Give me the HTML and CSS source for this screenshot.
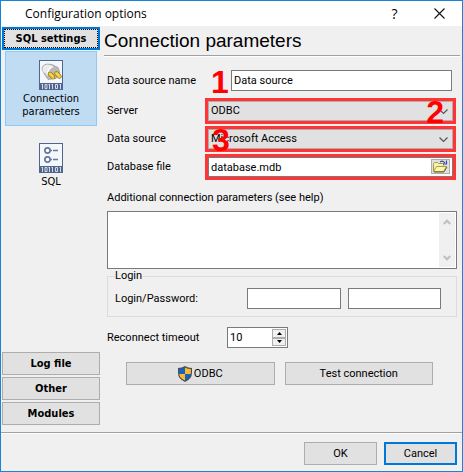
FILE: index.html
```html
<!DOCTYPE html>
<html lang="en">
<head>
    <meta charset="UTF-8">
    <meta name="viewport" content="width=device-width, initial-scale=1.0">
    <title>Configuration options</title>
    <link rel="stylesheet" href="styles.css">
</head>

<body>
    <header class="titlebar">
        <h1 class="title">Configuration options</h1>
        <button type="button" class="title-button" aria-label="Help">?</button>
        <button type="button" class="title-button" aria-label="Close">
            <svg width="11" height="11" viewBox="0 0 11 11"><path d="M.5.5l10 10M10.5.5l-10 10" stroke="#111" stroke-width="1.1"/></svg>
        </button>
    </header>

    <div class="window-body">
        <nav class="sidebar">
            <button type="button" class="group-button active">SQL settings</button>
            <button type="button" class="side-item selected">
                <svg width="24" height="30" viewBox="0 0 24 30">
                    <rect x=".5" y=".5" width="23" height="29" fill="#f4f7fc" stroke="#52658c"/>
                    <path d="M3 9q0-4 5-5l5 .5 6 3 2 5-4 6-8 1-4-6z" fill="#b9b9b9" stroke="#8f8f8f" stroke-width=".6"/>
                    <path d="M3.500 9q0-4 5-4.500l5 1-5 8q-5 0-5-4.500z" fill="#ececec"/>
                    <path d="M14 6.500q-6 3-6 9" fill="none" stroke="#fff" stroke-width="1.200"/>
                    <path d="M11 14l3 3M17.500 13.500l3 3" stroke="#7d6200" stroke-width="4.400" stroke-linecap="round"/>
                    <path d="M11 14l3 3M17.500 13.500l3 3" stroke="#f5c52b" stroke-width="3.200" stroke-linecap="round"/>
                    <path d="M11 13.500l2.500 2.500M17.500 13l2.500 2.500" stroke="#ffe98a" stroke-linecap="round"/>
                    <rect x="1" y="23" width="22" height="6" fill="#52658c"/>
                    <path d="M3.500 24v5M2.500 24.500h1M13.500 24v5M12.500 24.500h1M10.500 24v5M9.500 24.500h1M21.500 24v5M20.500 24.500h1M6 24.500h2v4H6zM16.500 24.500h2v4h-2z" fill="none" stroke="#dfe6f4" stroke-width=".9"/>
                </svg>
                <span>Connection parameters</span>
            </button>
            <button type="button" class="side-item">
                <svg width="24" height="30" viewBox="0 0 24 30">
                    <rect x=".5" y=".5" width="23" height="29" fill="#f4f7fc" stroke="#52658c"/>
                    <circle cx="8.500" cy="7.500" r="2.600" fill="#fff" stroke="#65779d" stroke-width="1.600"/>
                    <circle cx="8.500" cy="16.500" r="2.600" fill="#fff" stroke="#65779d" stroke-width="1.600"/>
                    <path d="M5 7.500h1M11 7.500h2M14 7.500h5M5 16.500h1M11 16.500h2M14 16.500h5" stroke="#65779d" stroke-width="1.400"/>
                    <rect x="1" y="23" width="22" height="6" fill="#52658c"/>
                    <path d="M3.500 24v5M2.500 24.500h1M13.500 24v5M12.500 24.500h1M10.500 24v5M9.500 24.500h1M21.500 24v5M20.500 24.500h1M6 24.500h2v4H6zM16.500 24.500h2v4h-2z" fill="none" stroke="#dfe6f4" stroke-width=".9"/>
                </svg>
                <span>SQL</span>
            </button>
            <div class="bottom-groups">
                <button type="button" class="group-button">Log file</button>
                <button type="button" class="group-button">Other</button>
                <button type="button" class="group-button">Modules</button>
            </div>
        </nav>

        <main class="content">
            <h2 class="heading">Connection parameters</h2>
            <form id="connection-form" class="connection-form">
                <div class="row name-row">
                    <label for="source-name">Data source name</label>
                    <div class="field">
                        <input type="text" id="source-name" value="Data source">
                        <span class="step step-name">1</span>
                    </div>
                </div>
                <div class="row">
                    <label for="server">Server</label>
                    <div class="field marked">
                        <select id="server"><option>ODBC</option></select>
                        <svg class="chevron" width="9" height="6" viewBox="0 0 9 6"><path d="M.5.5l4 4 4-4" fill="none" stroke="#555" stroke-width="1.200"/></svg>
                        <span class="step step-server">2</span>
                    </div>
                </div>
                <div class="row">
                    <label for="source">Data source</label>
                    <div class="field marked">
                        <select id="source"><option>Microsoft Access</option></select>
                        <svg class="chevron" width="9" height="6" viewBox="0 0 9 6"><path d="M.5.5l4 4 4-4" fill="none" stroke="#555" stroke-width="1.200"/></svg>
                        <span class="step step-source">3</span>
                    </div>
                </div>
                <div class="row">
                    <label for="database">Database file</label>
                    <div class="field marked">
                        <input type="text" id="database" value="database.mdb">
                        <button type="button" class="browse" aria-label="Browse">
                            <svg width="17" height="13" viewBox="0 0 17 13">
                                <path d="M1.500 11.500v-8l1-1h3l1 1h5v2" fill="#f7f3a8" stroke="#a39c4a"/>
                                <path d="M1.500 11.500l3-5h10l-3 5z" fill="#fdf6b0" stroke="#a39c4a"/>
                                <path d="M2 12h10l3-5" fill="none" stroke="#6b662c"/>
                                <path d="M8 2q3-2 5 1M14.500.500v3.500h-3.500" fill="none" stroke="#3a46a8" stroke-width="1.200"/>
                            </svg>
                        </button>
                    </div>
                </div>

                <label for="additional" class="additional-label">Additional connection parameters (see help)</label>
                <div class="memo">
                    <textarea id="additional"></textarea>
                    <div class="scrollbar">
                        <svg width="8" height="6" viewBox="0 0 8 6"><path d="M.7 5L4 1.700 7.300 5" fill="none" stroke="#bfbfbf" stroke-width="2.200"/></svg>
                        <svg width="8" height="6" viewBox="0 0 8 6"><path d="M.7 1L4 4.300 7.300 1" fill="none" stroke="#bfbfbf" stroke-width="2.200"/></svg>
                    </div>
                </div>

                <fieldset class="login">
                    <legend>Login</legend>
                    <div class="login-row">
                        <label for="login">Login/Password:</label>
                        <input type="text" id="login">
                        <input type="password" id="password" aria-label="Password">
                    </div>
                </fieldset>

                <div class="timeout">
                    <label for="timeout">Reconnect timeout</label>
                    <div class="spin">
                        <input type="text" id="timeout" value="10">
                        <div class="spin-buttons">
                            <button type="button" aria-label="Increase"><svg width="5" height="3" viewBox="0 0 5 3"><path d="M0 3L2.500 0 5 3z"/></svg></button>
                            <button type="button" aria-label="Decrease"><svg width="5" height="3" viewBox="0 0 5 3"><path d="M0 0l2.500 3L5 0z"/></svg></button>
                        </div>
                    </div>
                </div>

                <div class="actions">
                    <button type="button" class="button">
                        <svg width="14" height="16" viewBox="0 0 14 16">
                            <path d="M7 0q3 2 7 2v5q0 6-7 9-7-3-7-9V2q4 0 7-2z" fill="#4a4f55"/>
                            <path d="M7 1.400V8H1.200V3Q4.500 3 7 1.400zM7 8h5.800Q12.300 12 7 14.600z" fill="#1464c8"/>
                            <path d="M7 1.400V8h5.800V3Q9.500 3 7 1.400zM7 8H1.200Q1.700 12 7 14.600z" fill="#fdb92c"/>
                        </svg>
                        ODBC
                    </button>
                    <button type="button" class="button">Test connection</button>
                </div>
            </form>
        </main>
    </div>

    <footer class="footer">
        <button type="submit" form="connection-form" class="button">OK</button>
        <button type="button" class="button default">Cancel</button>
    </footer>
</body>
</html>
```
FILE: styles.css
```css
:root {
    --blue: #0078d7;
    --face: #f0f0f0;
    --button: #e1e1e1;
    --button-border: #adadad;
    --input-border: #7a7a7a;
    --mark: #ff3535;
}

* {
    box-sizing: border-box;
    margin: 0;
    padding: 0;
}

body {
    display: flex;
    flex-direction: column;
    min-height: 100vh;
    background: var(--face);
    border: 1px solid #1883d7;
    color: #000;
    font: 11px/14px Roboto, "Liberation Sans", sans-serif;
}

button,
input,
select,
textarea {
    font: inherit;
    color: inherit;
    border-radius: 0;
    outline: none;
}

input,
textarea {
    min-width: 0;
    background: #fff;
    border: 1px solid var(--input-border);
}

input {
    height: 21px;
    padding: 0 2px;
}

svg {
    display: block;
    flex: none;
}

.titlebar {
    display: flex;
    align-items: center;
    height: 25px;
    padding-left: 24px;
    background: #fff;
}

.title {
    flex: 1;
    font: 12px/16px "Open Sans", "Noto Sans", sans-serif;
}

.title-button {
    display: flex;
    align-items: center;
    justify-content: center;
    width: 45px;
    height: 25px;
    background: none;
    border: none;
    font: 14px/16px "Open Sans", "Noto Sans", sans-serif;
}

.window-body {
    display: flex;
    flex: 1;
    border-bottom: 1px solid #a0a0a0;
}

.sidebar {
    display: flex;
    flex-direction: column;
    width: 99px;
    padding: 1px 0 7px 1px;
    font: 11px/13px "DejaVu Sans Condensed", "DejaVu Sans", sans-serif;
}

.group-button {
    width: 100%;
    height: 23px;
    background: var(--button);
    border: 1px solid var(--button-border);
    font-weight: bold;
}

.group-button.active {
    border: 2px solid var(--blue);
    outline: 1px dotted #000;
    outline-offset: -3px;
}

.side-item {
    display: flex;
    flex-direction: column;
    align-items: center;
    gap: 2px;
    height: 75px;
    margin: 1px 3px 7px;
    padding-top: 8px;
    background: none;
    border: 1px solid transparent;
}

.side-item.selected {
    background: #c0dcf3;
    border-color: #90c8f6;
}

.bottom-groups {
    display: flex;
    flex-direction: column;
    gap: 2px;
    margin-top: auto;
}

.content {
    flex: 1;
    min-width: 0;
    padding: 0 2px 0 4px;
}

.heading {
    height: 30px;
    border-bottom: 1px solid #a0a0a0;
    box-shadow: 0 1px #fff;
    font: 19px/30px "Liberation Sans", sans-serif;
}

.connection-form {
    padding: 14px 3px 0;
}

.row {
    display: grid;
    grid-template-columns: 98px 1fr;
    align-items: center;
    margin: 0 1px 2px 0;
}

.name-row {
    margin-bottom: 7px;
}

.field {
    position: relative;
    display: flex;
}

.name-row .field {
    padding: 0 4px 0 26px;
}

.field input,
.field select {
    flex: 1;
}

.marked {
    height: 26px;
    border: 3px solid var(--mark);
}

.marked select {
    appearance: none;
    height: 20px;
    padding: 0 2px;
    background: var(--button);
    border: 1px solid var(--button-border);
}

.marked input {
    height: 20px;
}

.chevron {
    position: absolute;
    right: 5px;
    top: 8px;
}

.browse {
    position: absolute;
    right: 3px;
    top: 2px;
    width: 19px;
    height: 15px;
    background: var(--button);
    border: 1px solid var(--button-border);
}

.step {
    position: absolute;
    top: -5px;
    color: #f00;
    font: bold 32px/32px "Liberation Sans", sans-serif;
    pointer-events: none;
}

.step-name {
    left: 6px;
    top: -4px;
}

.step-server {
    right: 9px;
}

.step-source {
    left: 4px;
}

.additional-label {
    display: block;
    margin: 11px 0 6px;
}

.memo {
    display: flex;
    height: 58px;
    padding: 1px;
    background: #fff;
    border: 1px solid var(--input-border);
}

.memo textarea {
    flex: 1;
    border: none;
    resize: none;
}

.scrollbar {
    display: flex;
    flex-direction: column;
    align-items: center;
    justify-content: space-between;
    width: 16px;
    padding: 6px 0;
    background: var(--face);
}

.login {
    margin-bottom: 10px;
    padding: 5px 15px 7px 7px;
    border: 1px solid #dcdcdc;
}

.login legend {
    line-height: 14px;
}

.login-row {
    display: grid;
    grid-template-columns: 125px 1fr 1fr;
    column-gap: 7px;
    align-items: center;
}

.timeout {
    display: grid;
    grid-template-columns: 120px 61px;
    align-items: center;
    margin-bottom: 14px;
}

.spin {
    display: flex;
    height: 21px;
    padding: 1px;
    background: #fff;
    border: 1px solid var(--input-border);
}

.spin input {
    flex: 1;
    height: 17px;
    padding: 0 1px;
    border: none;
}

.spin-buttons {
    display: flex;
    flex-direction: column;
    width: 14px;
}

.spin-buttons button {
    display: flex;
    flex: 1;
    align-items: center;
    justify-content: center;
    background: var(--face);
    border: 1px solid var(--button-border);
}

.button {
    display: flex;
    align-items: center;
    justify-content: center;
    gap: 2px;
    width: 73px;
    height: 23px;
    background: var(--button);
    border: 1px solid var(--button-border);
}

.button.default {
    border: 2px solid var(--blue);
}

.actions {
    display: flex;
    gap: 10px;
    padding: 0 24px 0 19px;
}

.actions .button {
    flex: 1;
}

.footer {
    display: flex;
    justify-content: flex-end;
    gap: 7px;
    padding: 8px 5px 6px;
    border-top: 1px solid #fff;
}
```
